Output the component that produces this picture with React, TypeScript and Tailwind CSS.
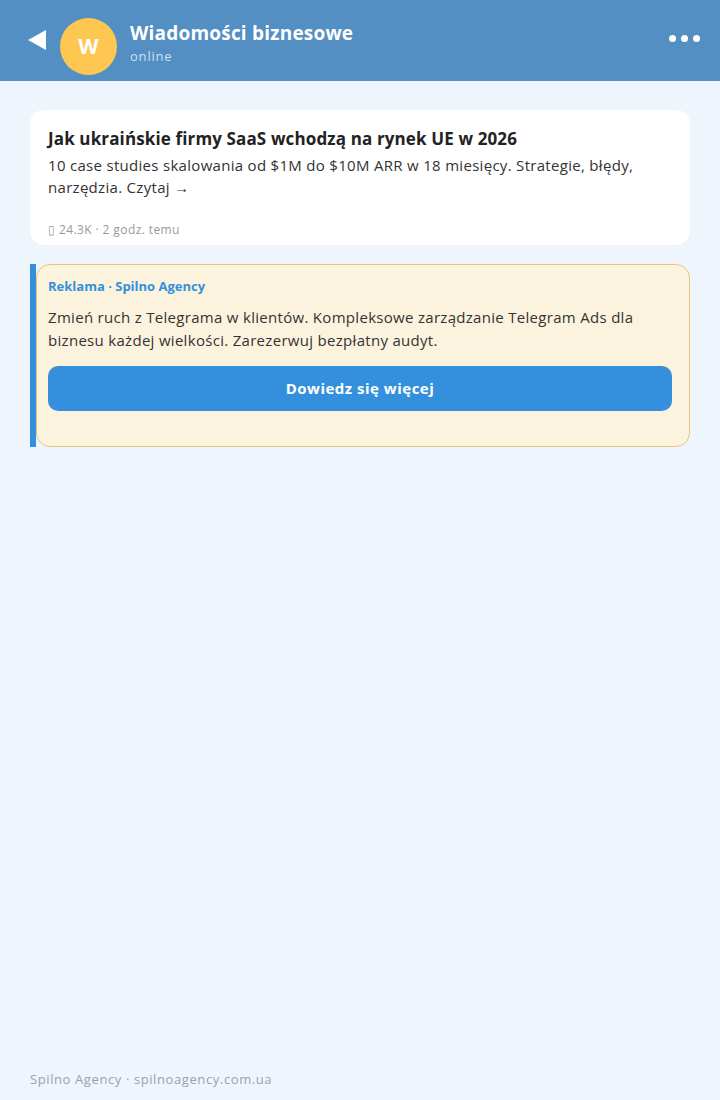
export default function App() {
  const font = { fontFamily: '"Open Sans", "Noto Sans", sans-serif' };
  return (
    <div
      className="flex min-h-[1100px] w-[720px] flex-col bg-[#eef5fc] text-[#222]"
      style={font}
    >
      {/* header */}
      <header className="flex h-[81px] items-start bg-[#538fc2] pl-[28px] pr-[20px] pt-[18px]">
        <svg width="18" height="20" viewBox="0 0 18 20" className="mt-[12px] shrink-0">
          <polygon points="18,0 18,20 0,10" fill="#fff" />
        </svg>
        <div className="ml-[14px] flex h-[57px] w-[57px] shrink-0 items-center justify-center rounded-full bg-[#fec751] text-[21px] font-bold text-white">
          W
        </div>
        <div className="ml-[13px] mt-[3px] flex flex-1 flex-col">
          <span className="text-[19px] font-bold leading-[24px] tracking-[0.2px] text-white">
            Wiadomości biznesowe
          </span>
          <span className="mt-[2px] text-[13px] leading-[18px] tracking-[0.8px] text-[#cfe0f1]">
            online
          </span>
        </div>
        <div className="mt-[17px] flex items-center gap-[5px]">
          <span className="h-[7px] w-[7px] rounded-full bg-white" />
          <span className="h-[7px] w-[7px] rounded-full bg-white" />
          <span className="h-[7px] w-[7px] rounded-full bg-white" />
        </div>
      </header>

      <main className="flex flex-1 flex-col gap-[19px] px-[30px] pt-[29px]">
        {/* post */}
        <article className="rounded-[14px] bg-white px-[18px] pb-[6px] pt-[17px]">
          <h2 className="text-[17px] font-bold leading-[24px] tracking-[0.13px] text-[#222]">
            Jak ukraińskie firmy SaaS wchodzą na rynek UE w 2026
          </h2>
          <p className="mt-[3px] text-[15px] leading-[22px] tracking-[0.3px] text-[#333]">
            10 case studies skalowania od $1M do $10M ARR w 18 miesięcy. Strategie, błędy,
            narzędzia. Czytaj →
          </p>
          <div className="mt-[23px] text-[12px] leading-[18px] tracking-[0.4px] text-[#999]">
            ▯ 24.3K · 2 godz. temu
          </div>
        </article>

        {/* ad */}
        <div className="flex">
          <div className="w-[6px] shrink-0 bg-[#3490dc]" />
          <div className="flex-1 rounded-[14px] border border-[#e7c67c] bg-[#fcf3de] pb-[35px] pl-[11px] pr-[17px] pt-[12px]">
            <div className="text-[13px] font-bold leading-[18px] text-[#3490dc]">
              Reklama · Spilno Agency
            </div>
            <p className="mt-[11px] text-[15px] leading-[23px] tracking-[0.3px] text-[#333]">
              Zmień ruch z Telegrama w klientów. Kompleksowe zarządzanie Telegram Ads dla
              biznesu każdej wielkości. Zarezerwuj bezpłatny audyt.
            </p>
            <button className="mt-[14px] flex h-[45px] w-full items-center justify-center rounded-[10px] bg-[#3490dc] text-[15px] font-bold tracking-[0.5px] text-white">
              Dowiedz się więcej
            </button>
          </div>
        </div>
      </main>

      <footer className="px-[30px] pb-[12px] text-[13px] leading-[18px] tracking-[0.6px] text-[#9aa3ad]">
        Spilno Agency · spilnoagency.com.ua
      </footer>
    </div>
  );
}
